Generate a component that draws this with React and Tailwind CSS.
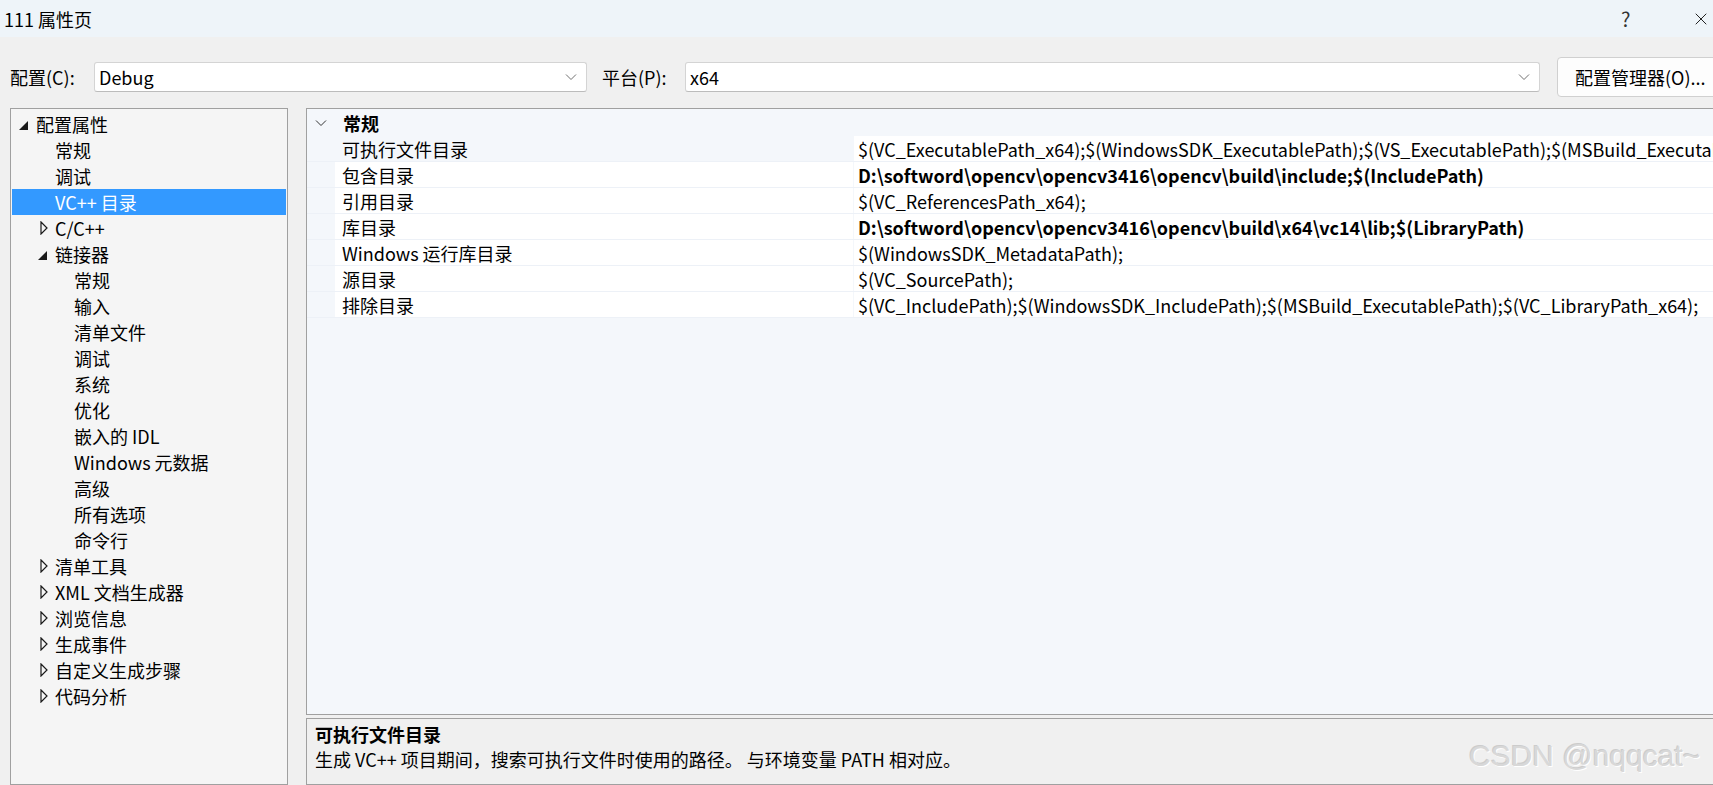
import { X } from 'lucide-react';

const font = { fontFamily: '"Noto Sans CJK SC", "Noto Sans", sans-serif' };

const tree = [
  { label: '配置属性', level: 0, icon: 'open' },
  { label: '常规', level: 1 },
  { label: '调试', level: 1 },
  { label: 'VC++ 目录', level: 1, selected: true },
  { label: 'C/C++', level: 1, icon: 'closed' },
  { label: '链接器', level: 1, icon: 'open' },
  { label: '常规', level: 2 },
  { label: '输入', level: 2 },
  { label: '清单文件', level: 2 },
  { label: '调试', level: 2 },
  { label: '系统', level: 2 },
  { label: '优化', level: 2 },
  { label: '嵌入的 IDL', level: 2 },
  { label: 'Windows 元数据', level: 2 },
  { label: '高级', level: 2 },
  { label: '所有选项', level: 2 },
  { label: '命令行', level: 2 },
  { label: '清单工具', level: 1, icon: 'closed' },
  { label: 'XML 文档生成器', level: 1, icon: 'closed' },
  { label: '浏览信息', level: 1, icon: 'closed' },
  { label: '生成事件', level: 1, icon: 'closed' },
  { label: '自定义生成步骤', level: 1, icon: 'closed' },
  { label: '代码分析', level: 1, icon: 'closed' },
];

const indent = { 0: 'pl-[0px]', 1: 'pl-[19px]', 2: 'pl-[38px]' };

const props = [
  { name: '可执行文件目录', value: '$(VC_ExecutablePath_x64);$(WindowsSDK_ExecutablePath);$(VS_ExecutablePath);$(MSBuild_ExecutablePath);$(FxCopDir);$(PATH);', current: true },
  { name: '包含目录', value: 'D:\\softword\\opencv\\opencv3416\\opencv\\build\\include;$(IncludePath)', bold: true },
  { name: '引用目录', value: '$(VC_ReferencesPath_x64);' },
  { name: '库目录', value: 'D:\\softword\\opencv\\opencv3416\\opencv\\build\\x64\\vc14\\lib;$(LibraryPath)', bold: true },
  { name: 'Windows 运行库目录', value: '$(WindowsSDK_MetadataPath);' },
  { name: '源目录', value: '$(VC_SourcePath);' },
  { name: '排除目录', value: '$(VC_IncludePath);$(WindowsSDK_IncludePath);$(MSBuild_ExecutablePath);$(VC_LibraryPath_x64);' },
];

function Chevron({ className = '' }) {
  return (
    <svg width="12" height="8" viewBox="0 0 12 8" className={`shrink-0 ${className}`}>
      <polyline points="1,1.5 6,6.5 11,1.5" fill="none" stroke="currentColor" strokeWidth="1" />
    </svg>
  );
}

function TreeIcon({ type }) {
  if (type === 'open') {
    return (
      <svg width="10" height="9" viewBox="0 0 10 9" className="ml-[7px] mt-[2px]">
        <polygon points="9,0 9,9 0,9" fill="#1a1a1a" />
      </svg>
    );
  }
  if (type === 'closed') {
    return (
      <svg width="8" height="14" viewBox="0 0 8 14" className="ml-[9px]">
        <polygon points="1,1 7,7 1,13" fill="none" stroke="#1a1a1a" strokeWidth="1.2" />
      </svg>
    );
  }
  return null;
}

function Combo({ value, className }) {
  return (
    <div className={`shrink-0 h-[30px] flex items-center justify-between bg-white border border-[#d4d4d4] border-b-[#bcbcbc] rounded-[3px] pl-[4px] pr-[9px] ${className}`}>
      <span>{value}</span>
      <Chevron className="text-[#707070]" />
    </div>
  );
}

export default function App() {
  return (
    <div style={font} className="relative w-[1713px] h-[785px] overflow-hidden bg-[#f0f0f0] text-[18px] text-black leading-none">
      {/* title bar */}
      <div className="h-[37px] bg-[#eef4f9] flex items-center pl-[4px] pr-[2px]">
        <span className="flex-1">111 属性页</span>
        <span className="w-[20px] text-[20px] text-[#333]">?</span>
        <span className="w-[50px]" />
        <X size={20} strokeWidth={1.2} className="text-[#222]" />
      </div>

      {/* config row */}
      <div className="h-[40px] mt-[20px] flex items-center pl-[10px] whitespace-nowrap">
        <span className="w-[84px] shrink-0">配置(C):</span>
        <Combo value="Debug" className="w-[493px]" />
        <span className="ml-[15px] w-[83px] shrink-0">平台(P):</span>
        <Combo value="x64" className="w-[855px]" />
        <button className="shrink-0 ml-[17px] h-[40px] w-[170px] bg-[#fdfdfd] border border-[#d0d0d0] rounded-[4px] text-left pl-[17px]">
          配置管理器(O)...
        </button>
      </div>

      {/* main */}
      <div className="mt-[11px] flex pl-[10px] h-[677px]">
        {/* tree */}
        <div className="shrink-0 w-[278px] h-full bg-[#f5f5f5] border border-[#a0a0a0] px-[1px] pt-[2px] whitespace-nowrap">
          {tree.map((t, i) => (
            <div
              key={i}
              className={`h-[26px] flex items-center ${indent[t.level]} ${t.selected ? 'bg-[#3399ff] text-white' : ''}`}
            >
              <div className="w-[24px] shrink-0 flex items-center">
                <TreeIcon type={t.icon} />
              </div>
              <span>{t.label}</span>
            </div>
          ))}
        </div>

        {/* right column */}
        <div className="ml-[18px] flex-1 min-w-0 flex flex-col">
          <div className="h-[607px] bg-[#f4f7fb] border border-[#a0a0a0] border-r-0 pt-[1px]">
            <div className="h-[26px] flex items-center">
              <Chevron className="ml-[8px] text-[#333]" />
              <span className="ml-[16px] font-bold">常规</span>
            </div>
            {props.map((p, i) => (
              <div key={i} className="h-[26px] flex pl-[28px] border-b border-[#edf1f7]">
                <div className={`shrink-0 w-[518px] flex items-center pl-[7px] whitespace-nowrap ${p.current ? '' : 'bg-white'}`}>
                  {p.name}
                </div>
                <div className="ml-[1px] flex-1 min-w-0 bg-white flex items-center pl-[4px] whitespace-nowrap overflow-hidden">
                  <span className={p.bold ? 'font-bold' : ''}>{p.value}</span>
                </div>
              </div>
            ))}
          </div>

          {/* description */}
          <div className="mt-[3px] flex-1 border border-[#a0a0a0] border-r-0 bg-[#f0f0f0] pl-[8px] whitespace-nowrap">
            <div className="h-[26px] flex items-center mt-[2px] font-bold">可执行文件目录</div>
            <div className="h-[24px] flex items-center">
              生成 VC++ 项目期间，搜索可执行文件时使用的路径。 与环境变量 PATH 相对应。
            </div>
          </div>
        </div>
      </div>

      {/* watermark */}
      <div
        className="absolute left-[1469px] top-[741px] text-[30px] text-[#d8d8d8] whitespace-nowrap"
        style={{ fontFamily: '"Liberation Sans", Arial, sans-serif', textShadow: '1px 1px 0 #ffffff, -1px -1px 0 #cccccc' }}
      >
        CSDN @nqqcat~
      </div>
    </div>
  );
}
